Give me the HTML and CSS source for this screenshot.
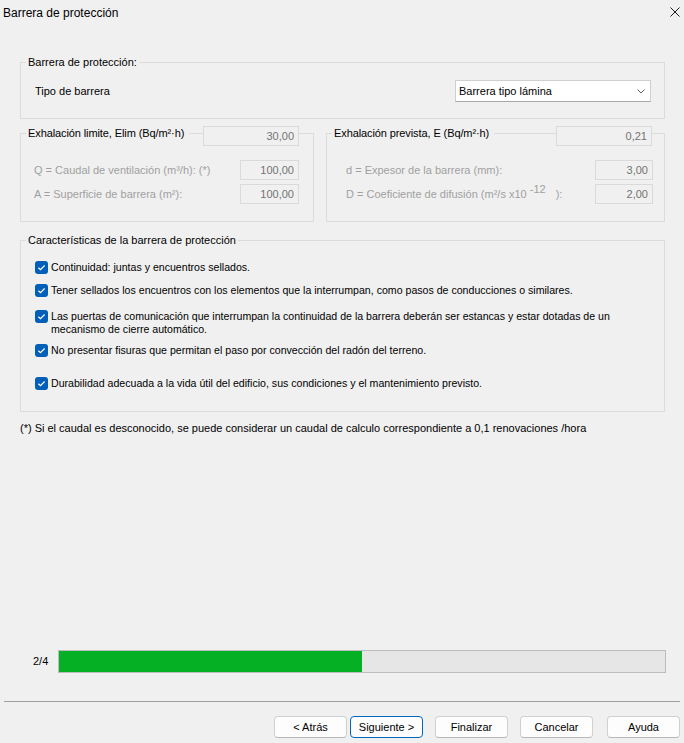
FILE: index.html
```html
<!DOCTYPE html>
<html lang="es">
<head>
<meta charset="utf-8">
<title>Barrera de protección</title>
<link rel="stylesheet" href="styles.css">
</head>
<body>
<div class="window">
  <header class="titlebar">
    <span class="title">Barrera de protección</span>
    <span class="close" aria-label="Cerrar">
      <svg width="10" height="10" viewBox="0 0 10 10"><path d="M0.5 0.5 L9.5 9.5 M9.5 0.5 L0.5 9.5" stroke="#1a1a1a" stroke-width="1" fill="none"/></svg>
    </span>
  </header>

  <main class="content">
    <fieldset class="group g-top">
      <legend class="lg">Barrera de protección:</legend>
      <div class="select-row">
        <span class="lbl">Tipo de barrera</span>
        <div class="combo">
          <span>Barrera tipo lámina</span>
          <svg width="8" height="5" viewBox="0 0 8 5"><path d="M0.5 0.5 L4 4 L7.5 0.5" stroke="#606060" stroke-width="1" fill="none"/></svg>
        </div>
      </div>
    </fieldset>

    <div class="pair">
      <fieldset class="group g-calc g-left">
        <legend class="lg-field lg-left">
          <span class="lg-text">Exhalación limite, Elim (Bq/m²·h)</span>
          <span class="rule"></span>
          <span class="field field-head">30,00</span>
        </legend>
        <div class="frow">
          <span class="dis">Q = Caudal de ventilación (m³/h): (*)</span>
          <span class="field">100,00</span>
        </div>
        <div class="frow">
          <span class="dis">A = Superficie de barrera (m²):</span>
          <span class="field">100,00</span>
        </div>
      </fieldset>

      <fieldset class="group g-calc g-right">
        <legend class="lg-field lg-right">
          <span class="lg-text">Exhalación prevista, E (Bq/m²·h)</span>
          <span class="rule"></span>
          <span class="field field-head">0,21</span>
        </legend>
        <div class="frow">
          <span class="dis">d = Expesor de la barrera (mm):</span>
          <span class="field">3,00</span>
        </div>
        <div class="frow">
          <span class="dis">D = Coeficiente de difusión (m²/s x10 <span class="sup">-12</span>):</span>
          <span class="field">2,00</span>
        </div>
      </fieldset>
    </div>

    <fieldset class="group g-checks">
      <legend class="lg">Características de la barrera de protección</legend>
      <div class="chk c1"><span class="box"><svg width="13" height="13" viewBox="0 0 13 13"><rect width="13" height="13" rx="3" fill="#005fb8"/><path d="M3.4 6.7 L5.5 8.7 L9.6 4.5" stroke="#fff" stroke-width="1.2" fill="none"/></svg></span><span class="ctext">Continuidad: juntas y encuentros sellados.</span></div>
      <div class="chk c2"><span class="box"><svg width="13" height="13" viewBox="0 0 13 13"><rect width="13" height="13" rx="3" fill="#005fb8"/><path d="M3.4 6.7 L5.5 8.7 L9.6 4.5" stroke="#fff" stroke-width="1.2" fill="none"/></svg></span><span class="ctext">Tener sellados los encuentros con los elementos que la interrumpan, como pasos de conducciones o similares.</span></div>
      <div class="chk c3"><span class="box"><svg width="13" height="13" viewBox="0 0 13 13"><rect width="13" height="13" rx="3" fill="#005fb8"/><path d="M3.4 6.7 L5.5 8.7 L9.6 4.5" stroke="#fff" stroke-width="1.2" fill="none"/></svg></span><span class="ctext">Las puertas de comunicación que interrumpan la continuidad de la barrera deberán ser estancas y estar dotadas de un<br>mecanismo de cierre automático.</span></div>
      <div class="chk c4"><span class="box"><svg width="13" height="13" viewBox="0 0 13 13"><rect width="13" height="13" rx="3" fill="#005fb8"/><path d="M3.4 6.7 L5.5 8.7 L9.6 4.5" stroke="#fff" stroke-width="1.2" fill="none"/></svg></span><span class="ctext">No presentar fisuras que permitan el paso por convección del radón del terreno.</span></div>
      <div class="chk c5"><span class="box"><svg width="13" height="13" viewBox="0 0 13 13"><rect width="13" height="13" rx="3" fill="#005fb8"/><path d="M3.4 6.7 L5.5 8.7 L9.6 4.5" stroke="#fff" stroke-width="1.2" fill="none"/></svg></span><span class="ctext">Durabilidad adecuada a la vida útil del edificio, sus condiciones y el mantenimiento previsto.</span></div>
    </fieldset>

    <p class="note">(*) Si el caudal es desconocido, se puede considerar un caudal de calculo correspondiente a 0,1 renovaciones /hora</p>
  </main>

  <div class="spacer"></div>

  <div class="progress-row">
    <span class="step">2/4</span>
    <div class="bar"><div class="fill" style="width: 50%"></div></div>
  </div>

  <div class="separator"></div>

  <footer class="buttons">
    <div class="nav-pair">
      <button class="btn">&lt; Atrás</button>
      <button class="btn btn-default">Siguiente &gt;</button>
    </div>
    <button class="btn">Finalizar</button>
    <button class="btn">Cancelar</button>
    <button class="btn btn-help">Ayuda</button>
  </footer>
</div>
</body>
</html>
```

FILE: styles.css
```css
* { box-sizing: border-box; }

html, body {
  margin: 0;
  padding: 0;
}

body {
  width: 684px;
  height: 743px;
  overflow: hidden;
  background: #f0f0f0;
  font-family: "Liberation Sans", Arial, sans-serif;
  font-size: 11px;
  color: #000;
}

.window {
  display: flex;
  flex-direction: column;
  height: 743px;
}

/* title bar */
.titlebar {
  height: 26px;
  display: flex;
  align-items: flex-start;
  justify-content: space-between;
  padding: 6px 4px 0 3px;
}
.title {
  font-size: 12px;
  line-height: 14px;
}
.close {
  display: flex;
  margin-top: 1px;
}

/* content */
.content {
  padding: 29px 19px 0 20px;
}

.group {
  margin: 0;
  border: 1px solid #dcdcdc;
  min-width: 0;
}

.lg {
  padding: 0 2px;
  line-height: 15px;
}

/* top group */
.g-top {
  padding: 10px 13px 16px 5px;
}
.select-row {
  display: flex;
  align-items: center;
  justify-content: space-between;
  padding-left: 9px;
}
.combo {
  width: 196px;
  height: 22px;
  background: #fff;
  border: 1px solid #cfcfcf;
  border-bottom-color: #a8a8a8;
  display: flex;
  align-items: center;
  justify-content: space-between;
  padding: 0 5px 0 3px;
}
.combo svg { display: block; }

/* calc groups */
.pair {
  display: flex;
  gap: 12px;
  margin-top: 7px;
}
.g-calc {
  padding-top: 19px;
  padding-bottom: 17px;
  display: flex;
  flex-direction: column;
  gap: 4px;
}
.g-left {
  width: 294px;
  padding-left: 5px;
  padding-right: 14px;
}
.g-right {
  width: 339px;
  padding-left: 5px;
  padding-right: 11px;
}
.lg-field {
  display: flex;
  align-items: flex-start;
  padding: 0;
  line-height: 15px;
  height: 15px;
}
.lg-left { width: 273px; }
.lg-right { width: 320px; }
.lg-text {
  padding: 0 5px 0 2px;
  white-space: nowrap;
  letter-spacing: -0.1px;
}
.rule {
  flex: 1;
  height: 1px;
  background: #dcdcdc;
  margin-top: 7px;
}
.field {
  display: block;
  height: 20px;
  line-height: 18px;
  border: 1px solid #dadada;
  background: #f0f0f0;
  color: #737373;
  text-align: right;
  padding-right: 4px;
}
.field-head {
  width: 96px;
  margin-bottom: -5px;
}
.frow {
  display: flex;
  align-items: center;
  justify-content: space-between;
}
.g-left .frow { padding-left: 8px; }
.g-right .frow { padding-left: 14px; }
.g-left .frow .field { width: 59px; }
.g-right .frow .field { width: 58px; }
.dis {
  color: #a0a0a0;
  white-space: nowrap;
}
.sup {
  position: relative;
  top: -5px;
  margin-right: 10px;
}

/* checks group */
.g-checks {
  margin-top: 11px;
  padding: 13px 10px 21px 5px;
}
.chk {
  display: flex;
  align-items: flex-start;
  padding-left: 9px;
  line-height: 13px;
  font-size: 10.6px;
}
.box {
  display: flex;
  flex: none;
  width: 13px;
  height: 13px;
  margin-right: 3px;
}
.c2 { margin-top: 10px; }
.c3 { margin-top: 13px; }
.c4 { margin-top: 8px; }
.c5 { margin-top: 20px; }

.note {
  margin: 10px 0 0 0;
  line-height: 13px;
}

.spacer { flex: 1; }

/* progress */
.progress-row {
  display: flex;
  align-items: center;
  padding: 0 18px 0 33px;
}
.step {
  width: 25px;
  line-height: 13px;
}
.bar {
  flex: 1;
  height: 23px;
  border: 1px solid #bcbcbc;
  background: #e6e6e6;
}
.fill {
  height: 100%;
  background: #06b025;
}

.separator {
  height: 1px;
  background: #a0a0a0;
  margin: 28px 4px 0 4px;
}

/* buttons */
.buttons {
  display: flex;
  justify-content: flex-end;
  gap: 12px;
  padding: 0 4px 5px 0;
  margin-top: 14px;
}
.nav-pair {
  display: flex;
  gap: 3px;
}
.btn {
  width: 73px;
  height: 22px;
  padding: 0;
  font-family: "Liberation Sans", Arial, sans-serif;
  font-size: 11px;
  color: #000;
  background: #fdfdfd;
  border: 1px solid #d0d0d0;
  border-bottom-color: #b8b8b8;
  border-radius: 4px;
}
.btn-default {
  border: 1px solid #0067c0;
}
.btn-help {
  margin-left: 2px;
}
```
